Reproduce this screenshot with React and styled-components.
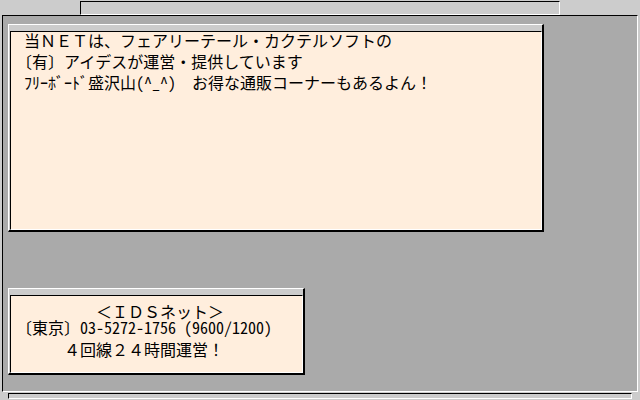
import React from 'react';
import styled, { createGlobalStyle, css } from 'styled-components';

const GlobalStyle = createGlobalStyle`
  html,
  body {
    margin: 0;
    padding: 0;
    background: #cccccc;
  }
  body {
    font-family: "Noto Sans CJK JP", "DejaVu Sans", sans-serif;
    color: #000000;
  }
`;

const sunken = css`
  border-style: solid;
  border-width: 1px;
  border-color: #000000 #ffffff #ffffff #000000;
`;

const Screen = styled.div`
  display: flex;
  flex-direction: column;
  align-items: flex-start;
  width: 640px;
  height: 400px;
  overflow: hidden;
  background: #cccccc;
`;

const TitleBar = styled.div`
  box-sizing: border-box;
  width: 480px;
  height: 14px;
  margin: 1px 0 0 80px;
  background: #cccccc;
  ${sunken};
`;

const Desk = styled.main`
  box-sizing: border-box;
  display: flex;
  flex-direction: column;
  align-items: flex-start;
  width: 636px;
  height: 377px;
  margin-left: 2px;
  padding: 8px 0 0 5px;
  background: #aaaaaa;
  ${sunken};
`;

const StatusBar = styled.div`
  box-sizing: border-box;
  width: 624px;
  height: 6px;
  margin: 1px 0 0 8px;
  background: #cccccc;
  ${sunken};
`;

const Window = styled.section`
  box-sizing: border-box;
  display: flex;
  width: ${({ w }) => w}px;
  height: ${({ h }) => h}px;
  margin-top: ${({ gap }) => gap || 0}px;
  padding: 6px 0 0 1px;
  background: #cccccc;
  border-style: solid;
  border-color: #ffffff #000000 #000000 #ffffff;
  border-width: 1px 2px 2px 1px;
`;

const Sheet = styled.div`
  flex: 1;
  padding: ${({ top }) => top}px 0 0 5px;
  background: #ffeedd;
  font-size: 16px;
  ${sunken};
`;

const Lines = styled.div`
  margin-top: ${({ shift }) => shift || 0}px;
`;

const Line = styled.div`
  height: ${({ lh }) => lh}px;
  line-height: ${({ lh }) => lh}px;
  margin-top: ${({ gap }) => gap || 0}px;
  padding-left: ${({ indent }) => indent || 0}px;
  white-space: pre;
`;

const Half = styled.span`
  font-family: "Noto Sans Mono CJK JP", "Noto Sans CJK JP", "DejaVu Sans Mono", monospace;
  font-feature-settings: "hwid";
`;

export default function App() {
  return (
    <>
      <GlobalStyle />
      <Screen>
        <TitleBar />
        <Desk>
          <Window w={536} h={208}>
            <Sheet top={0}>
              <Lines shift={-2}>
                <Line lh={21} indent={8}>
                  当ＮＥＴは、フェアリーテール・カクテルソフトの
                </Line>
                <Line lh={21}>〔有〕アイデスが運営・提供しています</Line>
                <Line lh={21} indent={8}>
                  ﾌﾘｰﾎﾞｰﾄﾞ盛沢山<Half>(^_^)</Half>　お得な通販コーナーもあるよん！
                </Line>
              </Lines>
            </Sheet>
          </Window>
          <Window w={297} h={87} gap={56}>
            <Sheet top={7}>
              <Line lh={16} indent={80}>
                ＜ＩＤＳネット＞
              </Line>
              <Line lh={16}>
                〔東京〕<Half>03-5272-1756 (9600/1200)</Half>
              </Line>
              <Line lh={16} gap={6} indent={48}>
                ４回線２４時間運営！
              </Line>
            </Sheet>
          </Window>
        </Desk>
        <StatusBar />
      </Screen>
    </>
  );
}
